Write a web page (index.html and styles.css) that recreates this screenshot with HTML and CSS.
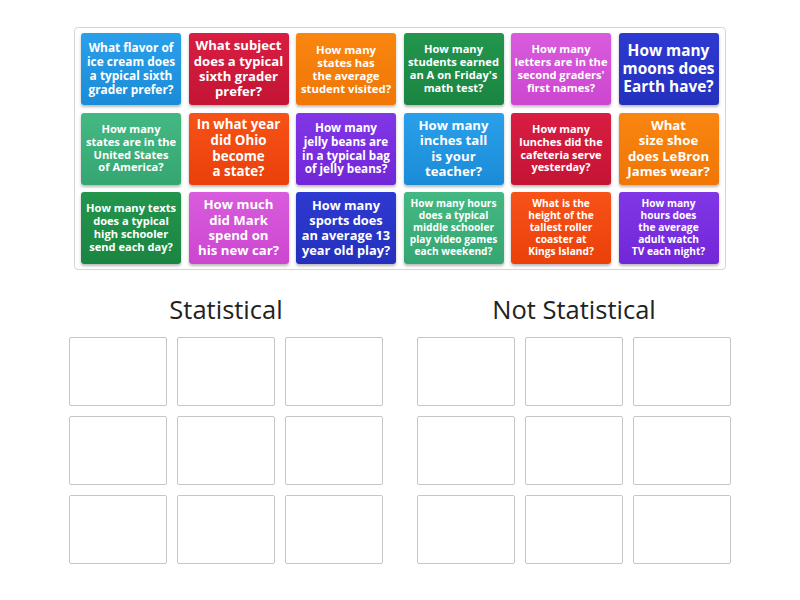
FILE: index.html
```html
<!DOCTYPE html>
<html lang="en">
<head>
<meta charset="utf-8">
<title>Statistical or Not Statistical</title>
<link rel="stylesheet" href="styles.css">
</head>
<body>
<div class="page">
  <div class="pool">
    <div class="card c-sky s119">What flavor of<br>ice cream does<br>a typical sixth<br>grader prefer?</div>
    <div class="card c-crimson s131">What subject<br>does a typical<br>sixth grader<br>prefer?</div>
    <div class="card c-orange s113">How many<br>states has<br>the average<br>student visited?</div>
    <div class="card c-green s111">How many<br>students earned<br>an A on Friday's<br>math test?</div>
    <div class="card c-orchid s111">How many<br>letters are in the<br>second graders'<br>first names?</div>
    <div class="card c-indigo s154">How many<br>moons does<br>Earth have?</div>

    <div class="card c-teal s111">How many<br>states are in the<br>United States<br>of America?</div>
    <div class="card c-red s133">In what year<br>did Ohio<br>become<br>a state?</div>
    <div class="card c-purple s117">How many<br>jelly beans are<br>in a typical bag<br>of jelly beans?</div>
    <div class="card c-sky s132">How many<br>inches tall<br>is your<br>teacher?</div>
    <div class="card c-crimson s109">How many<br>lunches did the<br>cafeteria serve<br>yesterday?</div>
    <div class="card c-orange s132">What<br>size shoe<br>does LeBron<br>James wear?</div>

    <div class="card c-green s111">How many texts<br>does a typical<br>high schooler<br>send each day?</div>
    <div class="card c-orchid s132">How much<br>did Mark<br>spend on<br>his new car?</div>
    <div class="card c-indigo s128">How many<br>sports does<br>an average 13<br>year old play?</div>
    <div class="card c-teal s102">How many hours<br>does a typical<br>middle schooler<br>play video games<br>each weekend?</div>
    <div class="card c-red s102">What is the<br>height of the<br>tallest roller<br>coaster at<br>Kings Island?</div>
    <div class="card c-purple s102">How many<br>hours does<br>the average<br>adult watch<br>TV each night?</div>
  </div>

  <div class="groups">
    <div class="group">
      <div class="group-title">Statistical</div>
      <div class="slots">
        <div class="slot"></div><div class="slot"></div><div class="slot"></div>
        <div class="slot"></div><div class="slot"></div><div class="slot"></div>
        <div class="slot"></div><div class="slot"></div><div class="slot"></div>
      </div>
    </div>
    <div class="group">
      <div class="group-title">Not Statistical</div>
      <div class="slots">
        <div class="slot"></div><div class="slot"></div><div class="slot"></div>
        <div class="slot"></div><div class="slot"></div><div class="slot"></div>
        <div class="slot"></div><div class="slot"></div><div class="slot"></div>
      </div>
    </div>
  </div>
</div>
</body>
</html>
```

FILE: styles.css
```css
html, body {
  margin: 0;
  padding: 0;
  background: #ffffff;
}

body {
  font-family: "Open Sans", "Noto Sans", "DejaVu Sans", sans-serif;
  color: #222;
}

.page {
  width: 800px;
  height: 600px;
  padding-top: 27px;
  box-sizing: border-box;
}

.pool {
  margin-left: 74px;
  width: fit-content;
  display: grid;
  grid-template-columns: repeat(6, 100px);
  grid-auto-rows: 72px;
  column-gap: 7.5px;
  row-gap: 7.5px;
  padding: 5px 6px;
  border: 1px solid #d4d4d4;
  border-radius: 4px;
}

.card {
  display: flex;
  align-items: center;
  justify-content: center;
  text-align: center;
  color: #ffffff;
  font-weight: 700;
  line-height: 1.17;
  white-space: nowrap;
  border-radius: 3px;
  box-shadow: 0 2px 3px rgba(0, 0, 0, 0.28);
}

.s102 { font-size: 10.2px; }
.s109 { font-size: 10.9px; }
.s111 { font-size: 11.1px; }
.s113 { font-size: 11.3px; }
.s117 { font-size: 11.7px; }
.s119 { font-size: 11.9px; }
.s128 { font-size: 12.8px; }
.s131 { font-size: 13.1px; }
.s132 { font-size: 13.2px; }
.s133 { font-size: 13.3px; }
.s154 { font-size: 15.4px; }

.c-sky     { background: linear-gradient(#2ba0ea, #1a8bd8); }
.c-crimson { background: linear-gradient(#d81e42, #c41434); }
.c-orange  { background: linear-gradient(#f98610, #f07606); }
.c-green   { background: linear-gradient(#23954d, #1a8542); }
.c-orchid  { background: linear-gradient(#d95cdd, #cc46d0); }
.c-indigo  { background: linear-gradient(#2e3ad0, #2430bd); }
.c-teal    { background: linear-gradient(#44b883, #35a672); }
.c-red     { background: linear-gradient(#f75218, #ea400a); }
.c-purple  { background: linear-gradient(#8137e6, #7126d8); }

.groups {
  display: flex;
  justify-content: center;
  gap: 34px;
  margin-top: 23px;
}

.group {
  width: 314px;
  display: flex;
  flex-direction: column;
  align-items: center;
}

.group-title {
  font-size: 25.5px;
  line-height: 33px;
  font-weight: 400;
  color: #222222;
  margin-bottom: 11px;
}

.slots {
  display: grid;
  grid-template-columns: repeat(3, 98px);
  grid-auto-rows: 69px;
  column-gap: 10px;
  row-gap: 10px;
}

.slot {
  border: 1px solid #c6c6c6;
  border-radius: 2px;
  box-sizing: border-box;
}
```
